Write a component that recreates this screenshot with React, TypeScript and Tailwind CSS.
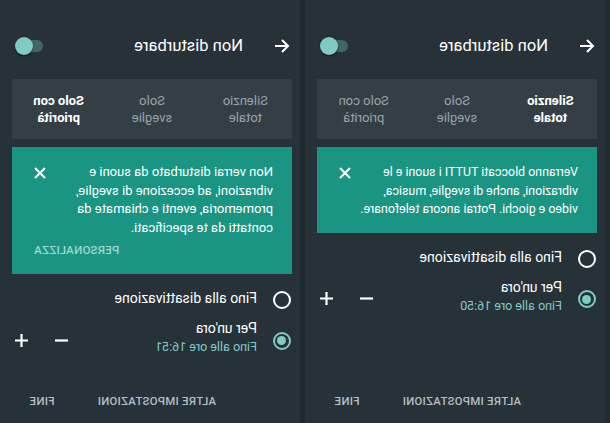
import React from "react";

type PanelProps = {
  selected: 0 | 2;
  lines: string[];
  showCustomize: boolean;
  time: string;
  compact: boolean;
};

function Radio({ checked }: { checked: boolean }) {
  return checked ? (
    <div className="w-[18px] h-[18px] rounded-full border-2 border-[#80cbc4] flex items-center justify-center">
      <div className="w-[9px] h-[9px] rounded-full bg-[#80cbc4]" />
    </div>
  ) : (
    <div className="w-[18px] h-[18px] rounded-full border-2 border-white" />
  );
}

function Panel({ selected, lines, showCustomize, time, compact }: PanelProps) {
  const tabs = [
    ["Silenzio", "totale"],
    ["Solo", "sveglie"],
    ["Solo con", "priorità"],
  ];
  return (
    <div className="flex h-full">
      <div className="w-[5px] h-full bg-[#20292e]" />
      <div className="w-[300px] h-full flex flex-col">
        {/* header */}
        <div className="mt-[22px] h-[48px] flex items-center">
          <svg className="ml-[10px]" width="16" height="16" viewBox="0 0 16 16" fill="none" stroke="white" strokeWidth="2">
            <path d="M15 8H2M8 2L2 8l6 6" />
          </svg>
          <div className="ml-[31px] text-[16.5px] text-white">Non disturbare</div>
          <div className="ml-auto mr-[15px] relative w-[28px] h-[18px] flex items-center">
            <div className="w-[26px] h-[12px] rounded-full bg-[#446663]" />
            <div className="absolute right-0 top-0 w-[18px] h-[18px] rounded-full bg-[#80cbc4] shadow-[0_1px_2px_rgba(0,0,0,0.6)]" />
          </div>
        </div>
        {/* tabs */}
        <div className="mt-[9px] ml-[8px] w-[280px] h-[60px] bg-[#343f45] grid grid-cols-3 items-center">
          {tabs.map((t, i) => (
            <div
              key={i}
              className={
                "text-center text-[13px] leading-[17px] " +
                (i === selected ? "text-white font-bold" : "text-[#98a3a8]")
              }
            >
              {t[0]}
              <br />
              {t[1]}
            </div>
          ))}
        </div>
        {/* card */}
        <div
          className={
            "mt-[8px] ml-[8px] w-[280px] bg-[#1b9583] pt-[16px] pl-[19px] pr-[22px] flex flex-col " +
            (compact ? "pb-[14px]" : "pb-[16px]")
          }
        >
          <div className="flex justify-between items-start">
            <div
              className={
                "leading-[18.5px] text-white whitespace-nowrap " +
                (compact ? "text-[12.4px]" : "text-[13px]")
              }
            >
              {lines.map((l, i) => (
                <div key={i}>{l}</div>
              ))}
            </div>
            <svg className="mt-[4px] shrink-0" width="12" height="12" viewBox="0 0 12 12" stroke="white" strokeWidth="2">
              <path d="M1 1l10 10M11 1L1 11" />
            </svg>
          </div>
          {showCustomize && (
            <div className="mt-[5px] text-right text-[11.5px] leading-[16px] tracking-[0.2px] font-medium text-[#9fd6cd]">
              PERSONALIZZA
            </div>
          )}
        </div>
        {/* radios */}
        <div className="mt-[13px] ml-[9px] flex items-start">
          <div className="mt-[4px]">
            <Radio checked={false} />
          </div>
          <div className="ml-[16px] text-[14px] leading-[22px] text-white">Fino alla disattivazione</div>
        </div>
        <div className="mt-[9px] ml-[9px] flex items-center">
          <div className="mt-[7px]">
            <Radio checked={true} />
          </div>
          <div className="ml-[16px] flex flex-col">
            <div className="text-[14px] leading-[20px] text-white">Per un'ora</div>
            <div className="text-[12.5px] leading-[18px] text-[#80cbc4]">Fino alle ore {time}</div>
          </div>
          <div className="ml-auto mr-[15px] flex items-center gap-[27px] mt-[6px]">
            <svg width="13" height="13" viewBox="0 0 13 13" stroke="white" strokeWidth="2.2">
              <path d="M0 6.5h13" />
            </svg>
            <svg width="13" height="13" viewBox="0 0 13 13" stroke="white" strokeWidth="2.2">
              <path d="M0 6.5h13M6.5 0v13" />
            </svg>
          </div>
        </div>
        {/* buttons */}
        <div className="mt-auto mb-[13px] h-[16px] flex items-center text-[11.3px] font-medium text-[#b4bec3] tracking-[0.3px]">
          <div className="ml-[84px]">ALTRE IMPOSTAZIONI</div>
          <div className="ml-[43px]">FINE</div>
        </div>
      </div>
    </div>
  );
}

export default function App() {
  return (
    <div
      className="w-[610px] h-[423px] bg-[#263238] flex overflow-hidden -scale-x-100"
      style={{ fontFamily: "Roboto, 'Noto Sans', sans-serif" }}
    >
      <Panel
        selected={0}
        lines={[
          "Verranno bloccati TUTTI i suoni e le",
          "vibrazioni, anche di sveglie, musica,",
          "video e giochi. Potrai ancora telefonare.",
        ]}
        showCustomize={false}
        time="16:50"
        compact={true}
      />
      <Panel
        selected={2}
        lines={[
          "Non verrai disturbato da suoni e",
          "vibrazioni, ad eccezione di sveglie,",
          "promemoria, eventi e chiamate da",
          "contatti da te specificati.",
        ]}
        showCustomize={true}
        time="16:51"
        compact={false}
      />
    </div>
  );
}
